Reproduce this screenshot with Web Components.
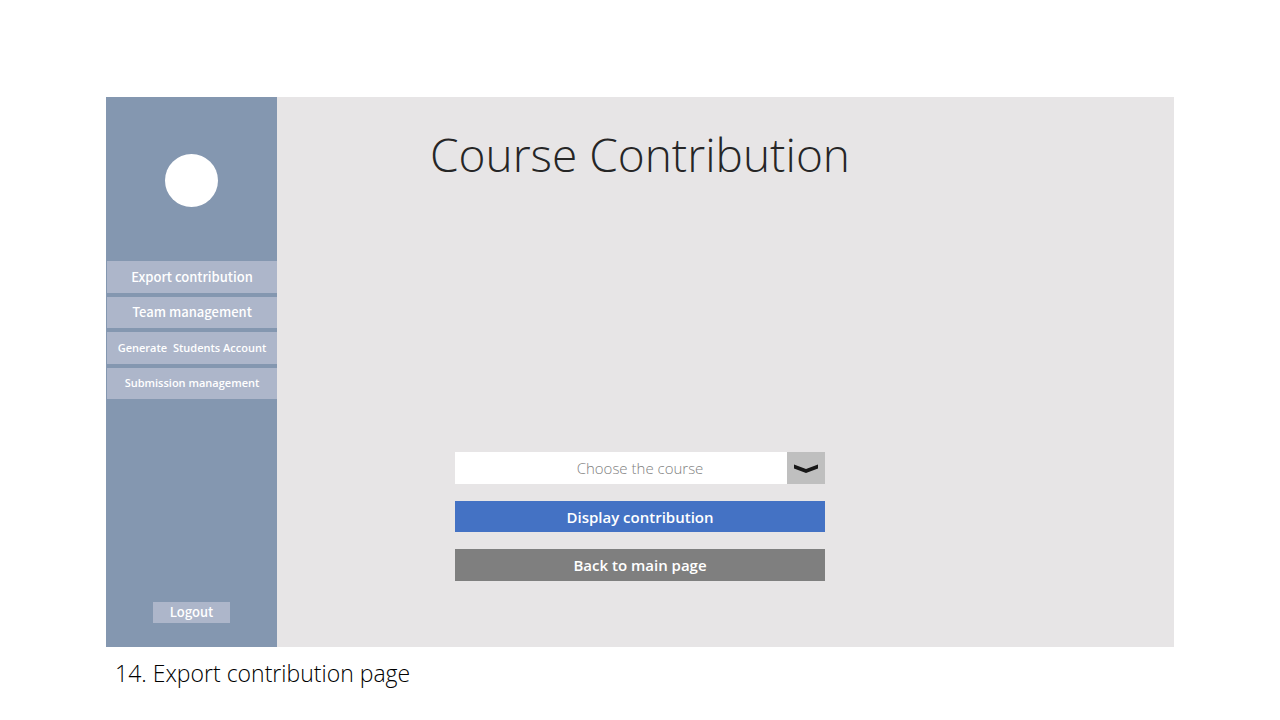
<!DOCTYPE html>
<html lang="en">
<head>
<meta charset="utf-8">
<title>Course Contribution</title>
<style>
  body { margin: 0; background: #fff; font-family: "Open Sans", "Noto Sans", sans-serif; }
</style>
</head>
<body>
<contribution-page></contribution-page>

<template id="page-template">
  <style>
    :host { display: flex; flex-direction: column; min-height: 100vh; box-sizing: border-box; padding: 97px 106px 0; }
    .frame { flex: 1; display: grid; grid-template-columns: 171px minmax(0, 1fr); background: #e7e5e6; }
    footer { padding: 8px 9px 29px; font-size: 23px; line-height: 36px; font-weight: 300; color: #000; }
  </style>
  <div class="frame">
    <side-bar>
      <nav-item>Export contribution</nav-item>
      <nav-item>Team management</nav-item>
      <nav-item small>Generate  Students Account</nav-item>
      <nav-item small>Submission management</nav-item>
    </side-bar>
    <course-panel heading="Course Contribution">
      <course-select label="Choose the course"></course-select>
      <action-button>Display contribution</action-button>
      <action-button tone="neutral">Back to main page</action-button>
    </course-panel>
  </div>
  <footer>14. Export contribution page</footer>
</template>

<template id="side-template">
  <style>
    :host { display: flex; flex-direction: column; align-items: center; background: #8497b0; padding: 57px 0 24px; font-family: "Noto Sans CJK SC", "Open Sans", sans-serif; }
    .avatar { width: 53px; height: 53px; border-radius: 50%; background: #fff; }
    nav { align-self: stretch; margin: 54px 0 24px 1px; display: grid; grid-auto-rows: 1fr; gap: 4px; min-height: 138px; }
    button { margin: auto 0 0; width: 77px; height: 21px; padding: 0 0 2px; border: 0; background: #adb6ca; color: #fff; font-family: inherit; font-size: 13px; font-weight: 500; line-height: 19px; cursor: pointer; }
  </style>
  <div class="avatar"></div>
  <nav><slot></slot></nav>
  <button type="button">Logout</button>
</template>

<template id="nav-template">
  <style>
    :host { display: flex; }
    a { flex: 1; display: flex; align-items: center; justify-content: center; background: #adb6ca; color: #fff; font-size: 13px; line-height: 20px; font-weight: 500; text-decoration: none; white-space: pre; }
    :host([small]) a { font-family: "Open Sans", sans-serif; font-size: 11px; font-weight: 600; }
  </style>
  <a href="#"><slot></slot></a>
</template>

<template id="panel-template">
  <style>
    :host { display: flex; flex-direction: column; align-items: center; justify-content: space-between; padding: 23px 171px 66px 0; }
    h1 { margin: 0; font-size: 46px; line-height: 68px; font-weight: 300; color: #262626; white-space: nowrap; }
    form { width: 370px; display: grid; gap: 17px; }
  </style>
  <h1></h1>
  <form><slot></slot></form>
</template>

<template id="select-template">
  <style>
    :host { display: block; position: relative; }
    select { display: block; width: 100%; height: 32px; padding: 0; border: 0; border-radius: 0; appearance: none; background: #fff; color: #7f7f7f; font-family: inherit; font-size: 15px; font-weight: 300; text-align: center; text-align-last: center; }
    .arrow { position: absolute; top: 0; right: 0; bottom: 0; width: 38px; background: #bfbfbf; pointer-events: none; display: flex; }
    svg { width: 38px; height: 32px; }
  </style>
  <select><option></option></select>
  <span class="arrow"><svg viewBox="0 0 38 32" aria-hidden="true"><path d="M7 12.5 19 17 31 12.5V16.5L19 21 7 16.5Z" fill="#171717"/></svg></span>
</template>

<template id="button-template">
  <style>
    :host { display: block; }
    button { display: block; width: 100%; height: 31px; padding: 0; border: 0; background: #4472c4; color: #fff; font-family: inherit; font-size: 15px; line-height: 24px; font-weight: 600; cursor: pointer; }
    :host([tone="neutral"]) button { background: #7f7f7f; height: 32px; }
  </style>
  <button type="button"><slot></slot></button>
</template>

<script>
  class Templated extends HTMLElement {
    constructor() {
      super();
      const t = document.getElementById(this.constructor.template);
      this.attachShadow({ mode: "open" }).append(t.content.cloneNode(true));
    }
  }
  customElements.define("action-button", class extends Templated { static template = "button-template"; });
  customElements.define("nav-item", class extends Templated { static template = "nav-template"; });
  customElements.define("side-bar", class extends Templated { static template = "side-template"; });
  customElements.define("course-select", class extends Templated {
    static template = "select-template";
    connectedCallback() {
      const label = this.getAttribute("label");
      this.shadowRoot.querySelector("select").setAttribute("aria-label", label);
      this.shadowRoot.querySelector("option").textContent = label;
    }
  });
  customElements.define("course-panel", class extends Templated {
    static template = "panel-template";
    connectedCallback() {
      this.shadowRoot.querySelector("h1").textContent = this.getAttribute("heading");
    }
  });
  customElements.define("contribution-page", class extends Templated { static template = "page-template"; });
</script>
</body>
</html>
